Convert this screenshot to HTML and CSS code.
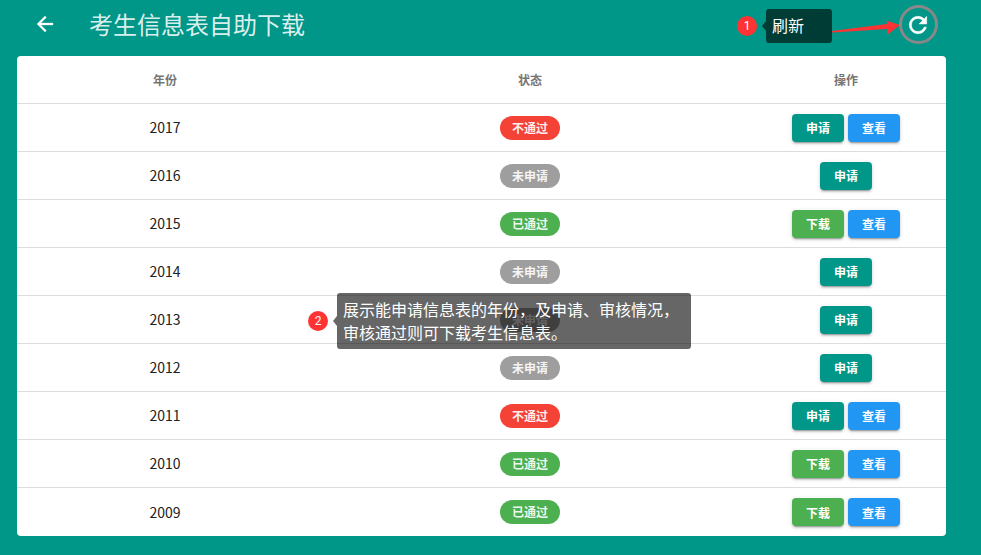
FILE: index.html
```html
<!DOCTYPE html>
<html lang="zh">
<head>
<meta charset="utf-8">
<title>考生信息表自助下载</title>
<link rel="stylesheet" href="styles.css">
</head>
<body>
<header class="bar">
  <svg class="back" viewBox="0 0 24 24"><path d="M20 11H7.83l5.59-5.59L12 4l-8 8 8 8 1.41-1.41L7.83 13H20v-2z"/></svg>
  <h1 class="title">考生信息表自助下载</h1>
  <svg class="refresh" viewBox="0 0 24 24"><path d="M17.65 6.35C16.2 4.9 14.21 4 12 4c-4.42 0-7.99 3.58-7.99 8s3.57 8 7.99 8c3.73 0 6.84-2.55 7.73-6h-2.08c-.82 2.33-3.04 4-5.65 4-3.31 0-6-2.69-6-6s2.69-6 6-6c1.66 0 3.14.69 4.22 1.78L13 11h7V4l-2.35 2.35z"/></svg>
</header>
<main class="card">
  <div class="row head"><div>年份</div><div>状态</div><div>操作</div></div>
  <div class="row"><div>2017</div><div><span class="pill red">不通过</span></div><div class="acts"><button class="btn teal">申请</button><button class="btn blue">查看</button></div></div>
  <div class="row"><div>2016</div><div><span class="pill grey">未申请</span></div><div class="acts"><button class="btn teal">申请</button></div></div>
  <div class="row"><div>2015</div><div><span class="pill green">已通过</span></div><div class="acts"><button class="btn green">下载</button><button class="btn blue">查看</button></div></div>
  <div class="row"><div>2014</div><div><span class="pill grey">未申请</span></div><div class="acts"><button class="btn teal">申请</button></div></div>
  <div class="row"><div>2013</div><div><span class="pill grey">未申请</span></div><div class="acts"><button class="btn teal">申请</button></div></div>
  <div class="row"><div>2012</div><div><span class="pill grey">未申请</span></div><div class="acts"><button class="btn teal">申请</button></div></div>
  <div class="row"><div>2011</div><div><span class="pill red">不通过</span></div><div class="acts"><button class="btn teal">申请</button><button class="btn blue">查看</button></div></div>
  <div class="row"><div>2010</div><div><span class="pill green">已通过</span></div><div class="acts"><button class="btn green">下载</button><button class="btn blue">查看</button></div></div>
  <div class="row"><div>2009</div><div><span class="pill green">已通过</span></div><div class="acts"><button class="btn green">下载</button><button class="btn blue">查看</button></div></div>
</main>
<div class="hint hint-one">
  <span class="num">1</span>
  <span class="caret"></span>
  <div class="tip tip-one">刷新</div>
</div>
<svg class="arrow" viewBox="0 0 70 20"><polygon points="0,11 55,4 54.5,0.7 68,5 55,15 55,9 0,12.5"/></svg>
<div class="ring"></div>
<div class="hint hint-two">
  <span class="num">2</span>
  <span class="caret"></span>
  <div class="tip tip-two">展示能申请信息表的年份，及申请、审核情况，<br>审核通过则可下载考生信息表。</div>
</div>
</body>
</html>
```
FILE: styles.css
```css
* { box-sizing: border-box; }
html, body { margin: 0; height: 100%; }
body {
  position: relative;
  background: #009688;
  font-family: "Noto Sans CJK SC", sans-serif;
  overflow: hidden;
}
.bar {
  display: flex;
  align-items: center;
  height: 56px;
  padding: 0 50px 8px 33px;
  color: #fff;
}
.back { width: 24px; height: 24px; fill: #fff; stroke: #fff; stroke-width: .3; }
.title {
  margin: 0 0 0 32px;
  font-size: 24px;
  font-weight: 400;
  line-height: 32px;
  color: rgba(255, 255, 255, .87);
  flex: 1;
}
.refresh { width: 26px; height: 26px; fill: #fff; stroke: #fff; stroke-width: .5; margin-top: 1px; }
.card {
  margin: 0 35px 0 17px;
  background: #fff;
  border-radius: 4px;
  overflow: hidden;
}
.row {
  display: grid;
  grid-template-columns: 296px 434px 198px;
  height: 48px;
  align-items: center;
  text-align: center;
  font-size: 14px;
  line-height: 21px;
  color: #212121;
  border-bottom: 1px solid #ddd;
}
.row:last-child { border-bottom: 0; }
.head { font-size: 12px; font-weight: 700; color: #757575; }
.pill {
  display: inline-block;
  width: 60px;
  height: 24px;
  border-radius: 12px;
  font-size: 12px;
  font-weight: 700;
  line-height: 24px;
  color: rgba(255, 255, 255, .92);
  vertical-align: top;
}
.acts { display: flex; justify-content: center; gap: 4px; }
.btn {
  width: 52px;
  height: 28px;
  padding: 0;
  border: 0;
  border-radius: 4px;
  font: 700 12px "Noto Sans CJK SC", sans-serif;
  color: #fff;
  box-shadow: 0 3px 1px -2px rgba(0,0,0,.2), 0 2px 2px 0 rgba(0,0,0,.14), 0 1px 5px 0 rgba(0,0,0,.12);
}
.red { background: #f44336; }
.grey { background: #9e9e9e; }
.green { background: #4caf50; }
.teal { background: #009688; }
.blue { background: #2196f3; }
.hint { position: absolute; display: flex; align-items: center; }
.hint-one { left: 737px; top: 9px; }
.hint-two { left: 308px; top: 293px; }
.num {
  width: 20px;
  height: 20px;
  border-radius: 50%;
  background: #ff3333;
  color: #fff;
  font-family: Roboto, sans-serif;
  font-size: 12px;
  line-height: 20px;
  text-align: center;
}
.caret {
  width: 0;
  height: 0;
  margin-left: 5px;
  border: 5px solid transparent;
  border-left-width: 0;
  border-right: 4px solid rgba(0, 0, 0, .6);
}
.tip {
  background: rgba(0, 0, 0, .6);
  border-radius: 3px;
  color: #fff;
  font-size: 16px;
}
.tip-one { width: 66px; height: 34px; padding: 4px 6px; line-height: 24px; }
.tip-two { width: 354px; height: 56px; padding: 5px 6px 4px; line-height: 23px; white-space: nowrap; }
.arrow { position: absolute; left: 832px; top: 20px; width: 70px; height: 20px; fill: #ff3333; }
.ring {
  position: absolute;
  left: 899px;
  top: 5px;
  width: 39px;
  height: 39px;
  border: 3px solid #888;
  border-radius: 50%;
}
```
